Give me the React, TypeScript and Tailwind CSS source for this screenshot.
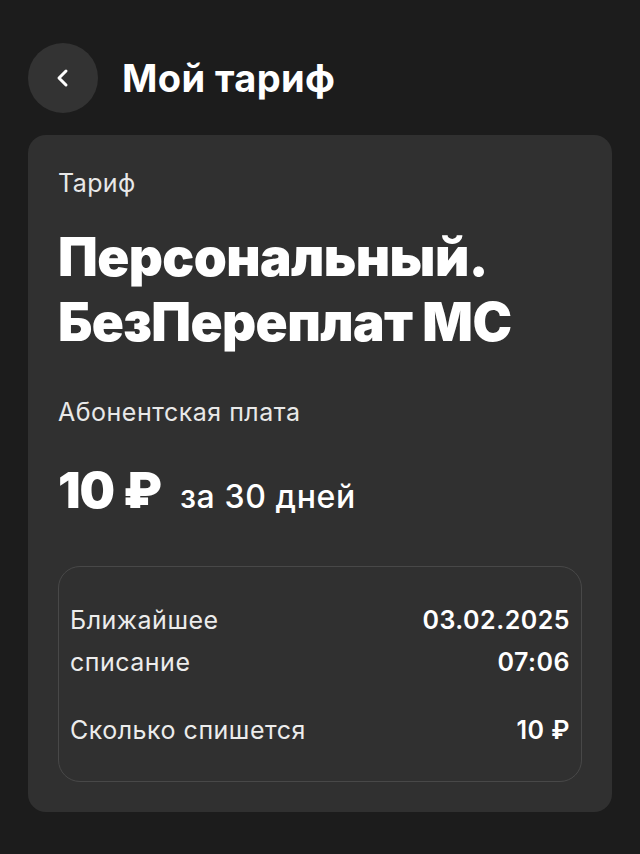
import React from 'react';

export default function App() {
  return (
    <div
      className="min-h-screen w-[640px] bg-[#1c1c1c] px-7 pt-[43px] text-white"
      style={{ fontFamily: 'Inter, "Noto Sans", sans-serif' }}
    >
      {/* Header */}
      <div className="flex items-center gap-6">
        <button className="flex h-[70px] w-[70px] items-center justify-center rounded-full bg-[#333333]">
          <svg width="24" height="24" viewBox="0 0 24 24" fill="none" stroke="white" strokeWidth="3" strokeLinecap="round" strokeLinejoin="round">
            <path d="M15 5l-7 7 7 7" />
          </svg>
        </button>
        <h1 className="text-[38px] font-bold tracking-[0.4px]">Мой тариф</h1>
      </div>

      {/* Card */}
      <div className="mt-[22px] rounded-[18px] bg-[#303030] px-[30px] pt-[28px] pb-[30px]">
        <p className="text-[25px] leading-[40px] tracking-[0.4px] text-[#e8e8e8]">Тариф</p>
        <h2 className="mt-[22px] text-[53px] font-black leading-[65px] tracking-[-0.6px]">
          Персональный.
          <br />
          БезПереплат МС
        </h2>
        <p className="mt-[39px] text-[25px] leading-[36px] tracking-[0.5px] text-[#e8e8e8]">Абонентская плата</p>
        <div className="mt-[30px] flex items-baseline gap-[19px]">
          <span className="text-[50px] font-black leading-[60px] tracking-[-1px]">10 ₽</span>
          <span className="text-[32px] font-medium tracking-[0.6px]">за 30 дней</span>
        </div>

        {/* Details */}
        <div className="mt-[45px] rounded-[22px] border border-[#484848] px-[11px] pt-[32px] pb-[30px]">
          <div className="flex items-start justify-between text-[25px] leading-[42px] tracking-[0.5px]">
            <span className="text-[#ececec]">
              Ближайшее
              <br />
              списание
            </span>
            <span className="text-right font-semibold">
              03.02.2025
              <br />
              07:06
            </span>
          </div>
          <div className="mt-[26px] flex items-center justify-between text-[25px] leading-[42px] tracking-[0.5px]">
            <span className="text-[#ececec]">Сколько спишется</span>
            <span className="font-semibold">10 ₽</span>
          </div>
        </div>
      </div>
    </div>
  );
}
